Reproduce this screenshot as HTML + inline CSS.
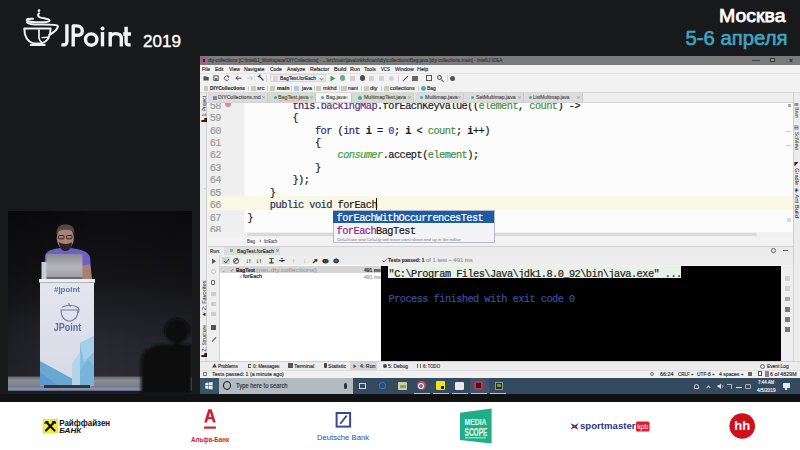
<!DOCTYPE html>
<html><head><meta charset="utf-8">
<style>
*{margin:0;padding:0;box-sizing:border-box}
html,body{width:800px;height:450px;overflow:hidden}
body{position:relative;background:#18191b;font-family:"Liberation Sans",sans-serif}
.a{position:absolute;white-space:pre}
.m{font-family:"Liberation Mono",monospace;-webkit-text-stroke:0.2px currentColor}
svg{position:absolute;left:0;top:0}
</style></head><body>

<svg width="800" height="56" style="left:0;top:0">
  <g font-family="Liberation Sans" fill="#fff">
    <text x="719" y="22.3" font-size="18.3" textLength="66.5" lengthAdjust="spacingAndGlyphs" stroke="#fff" stroke-width="0.75">Москва</text>
    <text x="685.5" y="45.2" font-size="19.5" textLength="102" lengthAdjust="spacingAndGlyphs" fill="#40a4c0" stroke="#40a4c0" stroke-width="0.6">5-6 апреля</text>
    <text x="143" y="47" font-size="16.5" textLength="38" lengthAdjust="spacingAndGlyphs" stroke="#fff" stroke-width="0.35">2019</text>
    </g>
  <g fill="none" stroke="#f4f4f4" stroke-width="3.4" stroke-linecap="butt" stroke-linejoin="round">
    <path d="M66.9 24.3 V41.5 C66.9 44.7 65 45.3 61.4 44.6"/>
    <path d="M73.2 46.4 V25.9 H76.6 C80.6 25.9 82.3 28.3 82.3 30.9 C82.3 33.6 80.6 35.3 76.6 35.3 H73.2"/>
    <circle cx="91.2" cy="39.6" r="5.7"/>
    <path d="M102.5 32 V46.4"/>
    <path d="M110.2 32 V46.4 M110.2 38.5 C110.2 34.9 112.5 33.6 115.7 33.6 C119 33.6 121.3 34.9 121.3 38.5 V46.4"/>
    <path d="M126.1 26.7 V42.3 C126.1 44.6 127.5 45 130.6 44.8 M123.2 34 H131"/>
  </g>
  <g fill="#f4f4f4">
    <circle cx="102.5" cy="28.6" r="2"/>
  </g>
  <g transform="translate(20,6)" fill="none" stroke="#f2f2f2" stroke-width="2" stroke-linecap="round" stroke-linejoin="round">
    <circle cx="19" cy="4.6" r="1.3" fill="#f2f2f2" stroke="none"/>
    <path d="M19 7.2 C17.6 8.6 17.8 10.4 20 11.4 C24 12.6 29.3 12.8 29.6 14.6 C29.6 16.4 22 16.5 15 16.2 C8 16 6.3 14.8 6.8 13.6 C7.3 12.8 10 12.6 13 12.7"/>
    <path d="M7 16.5 C8 18 12 18.6 20 18.6 C30 18.6 37 18.4 37.8 20 C38.3 22.5 34 26.5 29.3 28.8"/>
    <path d="M4.3 22.4 L30.6 22.4 C30.6 30 27.5 35.5 21.5 37.4 L13.5 37.4 C7.5 35.5 4.3 30 4.3 22.4 Z"/>
    <path d="M10.8 38.9 L24.6 38.9" stroke-width="2.3"/>
    <path d="M19 24 L19 32 C19.2 34 20 35 21.3 36.2" stroke-width="1.7"/>
    <path d="M22 31.6 L27.5 31.3" stroke-width="1.4"/>
  </g>
</svg>

<svg class="a" style="left:8px;top:211px" width="184" height="183" viewBox="8 211 184 183">
<defs>
 <linearGradient id="wall" x1="0" y1="0" x2="0" y2="1">
  <stop offset="0" stop-color="#0c0c0f"/>
  <stop offset="0.35" stop-color="#141418"/>
  <stop offset="0.7" stop-color="#27282e"/>
  <stop offset="1" stop-color="#2e2f36"/>
 </linearGradient>
 <linearGradient id="wallx" x1="0" y1="0" x2="1" y2="0">
  <stop offset="0" stop-color="#000" stop-opacity="0.25"/>
  <stop offset="0.5" stop-color="#000" stop-opacity="0"/>
  <stop offset="1" stop-color="#000" stop-opacity="0.15"/>
 </linearGradient>
 <linearGradient id="floor" x1="0" y1="0" x2="0" y2="1">
  <stop offset="0" stop-color="#606268"/>
  <stop offset="0.25" stop-color="#8c8e95"/>
  <stop offset="0.7" stop-color="#7a7d86"/>
  <stop offset="0.85" stop-color="#8a9ab8"/>
  <stop offset="1" stop-color="#3a4a68"/>
 </linearGradient>
 <linearGradient id="lap" x1="0" y1="0" x2="0" y2="1">
  <stop offset="0" stop-color="#8a8a92"/>
  <stop offset="0.5" stop-color="#b4b4ba"/>
  <stop offset="1" stop-color="#9c9ca4"/>
 </linearGradient>
 <linearGradient id="pod" x1="0" y1="0" x2="0" y2="1">
  <stop offset="0" stop-color="#e4e6ee"/>
  <stop offset="1" stop-color="#d6dae6"/>
 </linearGradient>
 <filter id="bl" x="-10%" y="-10%" width="120%" height="120%"><feGaussianBlur stdDeviation="0.7"/></filter>
 <filter id="bl2" x="-10%" y="-10%" width="120%" height="120%"><feGaussianBlur stdDeviation="1.6"/></filter>
</defs>
<rect x="8" y="211" width="184" height="183" fill="url(#wall)"/>
<rect x="8" y="211" width="184" height="183" fill="url(#wallx)"/>
<g filter="url(#bl)">
 <!-- floor -->
 <rect x="8" y="376.5" width="184" height="15" fill="url(#floor)"/>
 <rect x="8" y="391" width="184" height="3" fill="#1a1c22"/>
 <!-- speaker -->
 <path d="M44 280 L45 256 C46 251 52 249 60 248 L70 248 C80 249 88 251 90 257 L92 280 Z" fill="#6c5ec8"/>
 <path d="M82 266 L90 264 L92 280 L82 280Z" fill="#a88070"/>
 <rect x="41.5" y="262" width="5.5" height="18" fill="#c8ccd6"/>
 <ellipse cx="65.3" cy="238" rx="8.6" ry="11.5" fill="#a88272"/>
 <path d="M56.5 235 C56 227 60 224.5 65.5 224.5 C71 224.5 75 227 74.5 234 L73 231.5 C70 229 61 229 58 231.5 Z" fill="#5a4a40"/>
 <path d="M59 242 C59.5 248.5 62 251 65.5 251 C69 251 71.5 248.5 72 242 C69 244.5 62 244.5 59 242Z" fill="#2e2422"/>
 <g fill="none" stroke="#2a2020" stroke-width="1">
  <rect x="58.5" y="235.5" width="5.5" height="3.3" rx="1"/>
  <rect x="66.5" y="235.5" width="5.5" height="3.3" rx="1"/>
 </g>
 <rect x="46.5" y="254" width="36" height="25" fill="url(#lap)"/>
 <rect x="46.5" y="277" width="36" height="2.5" fill="#6a6a72"/>
 <!-- podium -->
 <rect x="39" y="279" width="56" height="3.5" fill="#eceef4"/>
 <rect x="40" y="282.5" width="54" height="103" fill="url(#pod)"/>
 <path d="M40 361 L72 378.5 L72 385.5 L40 385.5Z" fill="#6aa8d2"/>
 <path d="M40 372 L58 385.5 L40 385.5Z" fill="#5a9acc"/>
 <path d="M72 364 L80 352 L80 385.5 L72 385.5Z" fill="#b4d4ea"/>
 <path d="M80 343 L94 336 L94 385.5 L80 385.5Z" fill="#86bee0"/>
 <path d="M80 343 L94 336 L94 352 L84 362Z" fill="#a4d0ea"/>
 <path d="M80 370 L88 360 L94 366 L94 385.5 L80 385.5Z" fill="#78b4da"/>
 <rect x="44" y="385" width="46" height="3" fill="#2a2420" opacity="0.85"/>
</g>
<g filter="url(#bl)">
 <text x="54" y="292.3" font-family="Liberation Sans" font-size="7.4" font-weight="bold" fill="#5c76a4" textLength="26" lengthAdjust="spacingAndGlyphs">#jpoint</text>
 <text x="53.8" y="331" font-family="Liberation Sans" font-size="10" font-weight="bold" fill="#5a70a0" textLength="27.5" lengthAdjust="spacingAndGlyphs">JPoint</text>
 <g fill="none" stroke="#6a7aa0" stroke-width="1.1">
  <path d="M61 310 L78 310 C78 316 75 320 71 321 L68 321 C64 320 61 316 61 310Z"/>
  <path d="M62 307.5 C64 305 74 305 77 307 C79 308 80 310 78 313"/>
  <path d="M69 303 C68 304.5 71 305.5 70 307"/>
 </g>
</g>
<!-- silhouette -->
<g filter="url(#bl2)">
 <rect x="150" y="338" width="42" height="16" fill="#24252b"/>
 <circle cx="177" cy="331" r="12.5" fill="#08080a"/>
 <path d="M141 394 L141 362 C142 350 152 345 162 344 L192 344 L192 394Z" fill="#08080a"/>
</g>
</svg>
<div class="a" style="left:200px;top:56px;width:600px;height:338px;background:#f0f0f0;"></div>
<div class="a" style="left:200px;top:56px;width:600px;height:8.5px;background:#7b7b7b;"></div>
<div class="a" style="left:201px;top:57.3px;width:5px;height:6px;background:#c04a78;border-radius:1px"></div>
<div class="a" style="left:202.5px;top:58.5px;width:2.5px;height:3.5px;background:#2a2a55;"></div>
<svg class="a" style="left:207.7px;top:60.3px;overflow:visible" width="1" height="1"><text x="0" y="2.00" font-family="Liberation Sans" font-size="5.8" fill="#3a3a3a" textLength="294.5" lengthAdjust="spacingAndGlyphs" text-anchor="start" stroke="#3a3a3a" stroke-width="0.18" >diy-collections [C:\IntelliJ_Workspace\DIYCollections] - ...\src\main\java\mkhd\nani\diy\collections\Bag.java [diy-collections.main] - IntelliJ IDEA</text></svg>
<div class="a" style="left:752px;top:60px;width:8px;height:0.7px;background:#444;"></div>
<div class="a" style="left:770px;top:58px;width:4.5px;height:4.2px;background:#9a9a9a;border:0.8px solid #333"></div>
<div class="a" style="left:789.3px;top:60px;width:3.8px;height:0.7px;background:#333;transform:rotate(45deg)"></div>
<div class="a" style="left:789.3px;top:60px;width:3.8px;height:0.7px;background:#333;transform:rotate(-45deg)"></div>
<div class="a" style="left:200px;top:64.5px;width:600px;height:9px;background:#f2f2f2;"></div>
<svg class="a" style="left:201.89999999999998px;top:69px;overflow:visible" width="1" height="1"><text x="0" y="2.14" font-family="Liberation Sans" font-size="6.2" fill="#2a2a2a" textLength="8.0" lengthAdjust="spacingAndGlyphs" text-anchor="start" stroke="#2a2a2a" stroke-width="0.18" >File</text></svg>
<svg class="a" style="left:215.39999999999998px;top:69px;overflow:visible" width="1" height="1"><text x="0" y="2.14" font-family="Liberation Sans" font-size="6.2" fill="#2a2a2a" textLength="8.5" lengthAdjust="spacingAndGlyphs" text-anchor="start" stroke="#2a2a2a" stroke-width="0.18" >Edit</text></svg>
<svg class="a" style="left:228.6px;top:69px;overflow:visible" width="1" height="1"><text x="0" y="2.14" font-family="Liberation Sans" font-size="6.2" fill="#2a2a2a" textLength="11.1" lengthAdjust="spacingAndGlyphs" text-anchor="start" stroke="#2a2a2a" stroke-width="0.18" >View</text></svg>
<svg class="a" style="left:243.89999999999998px;top:69px;overflow:visible" width="1" height="1"><text x="0" y="2.14" font-family="Liberation Sans" font-size="6.2" fill="#2a2a2a" textLength="20.3" lengthAdjust="spacingAndGlyphs" text-anchor="start" stroke="#2a2a2a" stroke-width="0.18" >Navigate</text></svg>
<svg class="a" style="left:269.7px;top:69px;overflow:visible" width="1" height="1"><text x="0" y="2.14" font-family="Liberation Sans" font-size="6.2" fill="#2a2a2a" textLength="11.6" lengthAdjust="spacingAndGlyphs" text-anchor="start" stroke="#2a2a2a" stroke-width="0.18" >Code</text></svg>
<svg class="a" style="left:286.7px;top:69px;overflow:visible" width="1" height="1"><text x="0" y="2.14" font-family="Liberation Sans" font-size="6.2" fill="#2a2a2a" textLength="18.1" lengthAdjust="spacingAndGlyphs" text-anchor="start" stroke="#2a2a2a" stroke-width="0.18" >Analyze</text></svg>
<svg class="a" style="left:310.2px;top:69px;overflow:visible" width="1" height="1"><text x="0" y="2.14" font-family="Liberation Sans" font-size="6.2" fill="#2a2a2a" textLength="19.1" lengthAdjust="spacingAndGlyphs" text-anchor="start" stroke="#2a2a2a" stroke-width="0.18" >Refactor</text></svg>
<svg class="a" style="left:333.5px;top:69px;overflow:visible" width="1" height="1"><text x="0" y="2.14" font-family="Liberation Sans" font-size="6.2" fill="#2a2a2a" textLength="12.4" lengthAdjust="spacingAndGlyphs" text-anchor="start" stroke="#2a2a2a" stroke-width="0.18" >Build</text></svg>
<svg class="a" style="left:349.7px;top:69px;overflow:visible" width="1" height="1"><text x="0" y="2.14" font-family="Liberation Sans" font-size="6.2" fill="#2a2a2a" textLength="10.0" lengthAdjust="spacingAndGlyphs" text-anchor="start" stroke="#2a2a2a" stroke-width="0.18" >Run</text></svg>
<svg class="a" style="left:364.09999999999997px;top:69px;overflow:visible" width="1" height="1"><text x="0" y="2.14" font-family="Liberation Sans" font-size="6.2" fill="#2a2a2a" textLength="11.8" lengthAdjust="spacingAndGlyphs" text-anchor="start" stroke="#2a2a2a" stroke-width="0.18" >Tools</text></svg>
<svg class="a" style="left:380.9px;top:69px;overflow:visible" width="1" height="1"><text x="0" y="2.14" font-family="Liberation Sans" font-size="6.2" fill="#2a2a2a" textLength="8.8" lengthAdjust="spacingAndGlyphs" text-anchor="start" stroke="#2a2a2a" stroke-width="0.18" >VCS</text></svg>
<svg class="a" style="left:394.7px;top:69px;overflow:visible" width="1" height="1"><text x="0" y="2.14" font-family="Liberation Sans" font-size="6.2" fill="#2a2a2a" textLength="18.7" lengthAdjust="spacingAndGlyphs" text-anchor="start" stroke="#2a2a2a" stroke-width="0.18" >Window</text></svg>
<svg class="a" style="left:417.2px;top:69px;overflow:visible" width="1" height="1"><text x="0" y="2.14" font-family="Liberation Sans" font-size="6.2" fill="#2a2a2a" textLength="11.2" lengthAdjust="spacingAndGlyphs" text-anchor="start" stroke="#2a2a2a" stroke-width="0.18" >Help</text></svg>
<div class="a" style="left:200px;top:73.5px;width:600px;height:9.5px;background:#f2f2f2;"></div>
<div class="a" style="left:200px;top:73.3px;width:600px;height:0.5px;background:#e4e4e4;"></div>
<div class="a" style="left:200px;top:82.8px;width:600px;height:0.6px;background:#dadada;"></div>
<svg class="a" style="left:200px;top:73px" width="70" height="10"><g fill="none" stroke="#4a4a4a" stroke-width="1"><path d="M3.5 3.2 H6 L6.8 4 H8.8 V7.5 H3.5Z" fill="#555" stroke="none"/><rect x="13.8" y="2.9" width="4.4" height="4.6" stroke-width="0.9"/><rect x="14.8" y="5.2" width="2.4" height="1.6" fill="#4a4a4a" stroke="none"/><path d="M28.4 3.7 A2.3 2.3 0 1 0 28.7 6.3" stroke-width="0.9"/><path d="M27.2 2.4 L29.2 3.6 L27.6 4.9" stroke-width="0.8"/><path d="M36 5.2 H41.5 M38 3.2 L36 5.2 L38 7.2" stroke-width="1"/><path d="M47 5.2 H52.5 M50.5 3.2 L52.5 5.2 L50.5 7.2" stroke="#c4c4c4" stroke-width="1"/><path d="M54.3 2.5 V8" stroke="#d6d6d6" stroke-width="0.6"/><path d="M59 3 L63.5 7.5" stroke-width="1.3"/><path d="M57.8 4 L60.5 1.8" stroke-width="1.2"/></g></svg>
<div class="a" style="left:266px;top:74.5px;width:0.6px;height:7px;background:#d4d4d4;"></div>
<div class="a" style="left:270px;top:74.3px;width:56px;height:8px;background:#ececec;border:0.6px solid #d6d6d6"></div>
<div class="a" style="left:272.5px;top:75.6px;width:5px;height:5px;background:#d8d8d8;"></div>
<svg class="a" style="left:280.2px;top:78px;overflow:visible" width="1" height="1"><text x="0" y="2.14" font-family="Liberation Sans" font-size="6.2" fill="#2c2c2c" textLength="36.1" lengthAdjust="spacingAndGlyphs" text-anchor="start" stroke="#2c2c2c" stroke-width="0.18" >BagTest.forEach</text></svg>
<div class="a" style="left:320px;top:76.8px;width:3px;height:3px;background:transparent;border-right:0.8px solid #888;border-bottom:0.8px solid #888;transform:rotate(45deg)"></div>
<svg class="a" style="left:329px;top:74.5px" width="8" height="7"><path d="M1.5 0.8 L6.5 3.5 L1.5 6.2Z" fill="#3a9a5a"/></svg>
<div class="a" style="left:340px;top:75.3px;width:5px;height:5.5px;background:#6aa890;border-radius:50%"></div>
<div class="a" style="left:350px;top:75.5px;width:5px;height:5px;background:#cfcfcf;border-radius:1px"></div>
<div class="a" style="left:359.5px;top:75.3px;width:5px;height:5.5px;background:#4a4a4a;border-radius:50%"></div>
<div class="a" style="left:369px;top:75.5px;width:5px;height:5px;background:#d2d2d2;"></div>
<div class="a" style="left:379px;top:75.5px;width:5px;height:5px;background:#d2d2d2;"></div>
<div class="a" style="left:389px;top:75.5px;width:5px;height:5px;background:#d2d2d2;border-radius:50%"></div>
<div class="a" style="left:398px;top:74.5px;width:0.6px;height:7px;background:#d4d4d4;"></div>
<div class="a" style="left:402px;top:77.5px;width:7px;height:1.2px;background:#444;transform:rotate(-45deg)"></div>
<div class="a" style="left:412px;top:75.5px;width:6px;height:5px;background:#666;border-radius:0.5px"></div>
<div class="a" style="left:426px;top:75px;width:6px;height:6px;background:transparent;border:1px solid #555"></div>
<div class="a" style="left:437px;top:75.2px;width:5px;height:5px;background:transparent;border:1.1px solid #444;border-radius:50%"></div>
<div class="a" style="left:441px;top:79.8px;width:2.5px;height:1px;background:#444;transform:rotate(45deg)"></div>
<div class="a" style="left:447px;top:74.5px;width:0.6px;height:7px;background:#d4d4d4;"></div>
<div class="a" style="left:450px;top:75.5px;width:5px;height:5px;background:#555;border-radius:50%"></div>
<div class="a" style="left:200px;top:83.3px;width:600px;height:9.3px;background:#f2f2f2;"></div>
<div class="a" style="left:200px;top:92.4px;width:600px;height:0.5px;background:#d8d8d8;"></div>
<div class="a" style="left:203.7px;top:86px;width:4.300000000000011px;height:4.6px;background:#c9c9bc;border-radius:0.5px"></div>
<svg class="a" style="left:210.29999999999998px;top:88.3px;overflow:visible" width="1" height="1"><text x="0" y="2.14" font-family="Liberation Sans" font-size="6.2" fill="#2e2e2e" textLength="35.0" lengthAdjust="spacingAndGlyphs" text-anchor="start" font-weight="bold" stroke="#2e2e2e" stroke-width="0.18" >DIYCollections</text></svg>
<div class="a" style="left:251px;top:86px;width:4.599999999999994px;height:4.6px;background:#c9c9bc;border-radius:0.5px"></div>
<svg class="a" style="left:257.2px;top:88.3px;overflow:visible" width="1" height="1"><text x="0" y="2.14" font-family="Liberation Sans" font-size="6.2" fill="#2e2e2e" textLength="7.5" lengthAdjust="spacingAndGlyphs" text-anchor="start" stroke="#2e2e2e" stroke-width="0.18" >src</text></svg>
<div class="a" style="left:270px;top:86px;width:5px;height:4.6px;background:#c9c9bc;border-radius:0.5px"></div>
<svg class="a" style="left:276.59999999999997px;top:88.3px;overflow:visible" width="1" height="1"><text x="0" y="2.14" font-family="Liberation Sans" font-size="6.2" fill="#2e2e2e" textLength="12.5" lengthAdjust="spacingAndGlyphs" text-anchor="start" font-weight="bold" stroke="#2e2e2e" stroke-width="0.18" >main</text></svg>
<div class="a" style="left:294.4px;top:86px;width:5.100000000000023px;height:4.6px;background:#b4c8dc;border-radius:0.5px"></div>
<svg class="a" style="left:301.59999999999997px;top:88.3px;overflow:visible" width="1" height="1"><text x="0" y="2.14" font-family="Liberation Sans" font-size="6.2" fill="#2e2e2e" textLength="9.9" lengthAdjust="spacingAndGlyphs" text-anchor="start" stroke="#2e2e2e" stroke-width="0.18" >java</text></svg>
<div class="a" style="left:316.2px;top:86px;width:5.0px;height:4.6px;background:#c9c9bc;border-radius:0.5px"></div>
<svg class="a" style="left:322.7px;top:88.3px;overflow:visible" width="1" height="1"><text x="0" y="2.14" font-family="Liberation Sans" font-size="6.2" fill="#2e2e2e" textLength="13.6" lengthAdjust="spacingAndGlyphs" text-anchor="start" stroke="#2e2e2e" stroke-width="0.18" >mkhd</text></svg>
<div class="a" style="left:341.2px;top:86px;width:5.800000000000011px;height:4.6px;background:#c9c9bc;border-radius:0.5px"></div>
<svg class="a" style="left:348.4px;top:88.3px;overflow:visible" width="1" height="1"><text x="0" y="2.14" font-family="Liberation Sans" font-size="6.2" fill="#2e2e2e" textLength="9.9" lengthAdjust="spacingAndGlyphs" text-anchor="start" stroke="#2e2e2e" stroke-width="0.18" >nani</text></svg>
<div class="a" style="left:363.7px;top:86px;width:5.699999999999989px;height:4.6px;background:#c9c9bc;border-radius:0.5px"></div>
<svg class="a" style="left:370.3px;top:88.3px;overflow:visible" width="1" height="1"><text x="0" y="2.14" font-family="Liberation Sans" font-size="6.2" fill="#2e2e2e" textLength="7.5" lengthAdjust="spacingAndGlyphs" text-anchor="start" stroke="#2e2e2e" stroke-width="0.18" >diy</text></svg>
<div class="a" style="left:383.7px;top:86px;width:5.699999999999989px;height:4.6px;background:#c9c9bc;border-radius:0.5px"></div>
<svg class="a" style="left:390.2px;top:88.3px;overflow:visible" width="1" height="1"><text x="0" y="2.14" font-family="Liberation Sans" font-size="6.2" fill="#2e2e2e" textLength="24.7" lengthAdjust="spacingAndGlyphs" text-anchor="start" stroke="#2e2e2e" stroke-width="0.18" >collections</text></svg>
<div class="a" style="left:420.7px;top:85.6px;width:5.699999999999989px;height:5.6px;background:#5aa6c4;border-radius:50%"></div>
<svg class="a" style="left:427.4px;top:88.3px;overflow:visible" width="1" height="1"><text x="0" y="2.14" font-family="Liberation Sans" font-size="6.2" fill="#2e2e2e" textLength="8.9" lengthAdjust="spacingAndGlyphs" text-anchor="start" stroke="#2e2e2e" stroke-width="0.18" >Bag</text></svg>
<div class="a" style="left:248px;top:85.5px;width:0.6px;height:5.5px;background:#d0d0d0;"></div>
<div class="a" style="left:267px;top:85.5px;width:0.6px;height:5.5px;background:#d0d0d0;"></div>
<div class="a" style="left:291px;top:85.5px;width:0.6px;height:5.5px;background:#d0d0d0;"></div>
<div class="a" style="left:313.7px;top:85.5px;width:0.6px;height:5.5px;background:#d0d0d0;"></div>
<div class="a" style="left:339.4px;top:85.5px;width:0.6px;height:5.5px;background:#d0d0d0;"></div>
<div class="a" style="left:361px;top:85.5px;width:0.6px;height:5.5px;background:#d0d0d0;"></div>
<div class="a" style="left:381.2px;top:85.5px;width:0.6px;height:5.5px;background:#d0d0d0;"></div>
<div class="a" style="left:417.6px;top:85.5px;width:0.6px;height:5.5px;background:#d0d0d0;"></div>
<div class="a" style="left:200px;top:92.8px;width:600px;height:10px;background:#eeeeee;"></div>
<div class="a" style="left:208px;top:93px;width:60px;height:9.5px;background:#dcdcdc;border-right:0.7px solid #c8c8c8"></div>
<div class="a" style="left:212.5px;top:95.7px;width:4.199999999999989px;height:4.199999999999989px;background:#7090a8;border-radius:0.5px"></div>
<svg class="a" style="left:217.79999999999998px;top:97.4px;overflow:visible" width="1" height="1"><text x="0" y="2.07" font-family="Liberation Sans" font-size="6.0" fill="#505050" textLength="42.6" lengthAdjust="spacingAndGlyphs" text-anchor="start" stroke="#505050" stroke-width="0.18" >DIYCollections.md</text></svg>
<div class="a" style="left:261.8px;top:97.1px;width:3px;height:0.6px;background:#aaa;transform:rotate(45deg)"></div>
<div class="a" style="left:261.8px;top:97.1px;width:3px;height:0.6px;background:#aaa;transform:rotate(-45deg)"></div>
<div class="a" style="left:268px;top:93px;width:48.19999999999999px;height:9.5px;background:#d4dcd2;border-right:0.7px solid #c8c8c8"></div>
<div class="a" style="left:273.9px;top:95.7px;width:3.0px;height:3.0px;background:#40a898;border-radius:50%"></div>
<svg class="a" style="left:278.2px;top:97.4px;overflow:visible" width="1" height="1"><text x="0" y="2.07" font-family="Liberation Sans" font-size="6.0" fill="#4a5a48" textLength="30.4" lengthAdjust="spacingAndGlyphs" text-anchor="start" stroke="#4a5a48" stroke-width="0.18" >BagTest.java</text></svg>
<div class="a" style="left:278.5px;top:100.4px;width:29.80000000000001px;height:0.5px;background:#e4b4b0;"></div>
<div class="a" style="left:310.0px;top:97.1px;width:3px;height:0.6px;background:#aaa;transform:rotate(45deg)"></div>
<div class="a" style="left:310.0px;top:97.1px;width:3px;height:0.6px;background:#aaa;transform:rotate(-45deg)"></div>
<div class="a" style="left:316.2px;top:93px;width:35.400000000000034px;height:9.5px;background:#f6f6f6;border-right:0.7px solid #c8c8c8"></div>
<div class="a" style="left:320.5px;top:95.7px;width:3px;height:3px;background:#45a2c6;border-radius:50%"></div>
<svg class="a" style="left:326.0px;top:97.4px;overflow:visible" width="1" height="1"><text x="0" y="2.07" font-family="Liberation Sans" font-size="6.0" fill="#505050" textLength="19.7" lengthAdjust="spacingAndGlyphs" text-anchor="start" stroke="#505050" stroke-width="0.18" >Bag.java</text></svg>
<div class="a" style="left:345.40000000000003px;top:97.1px;width:3px;height:0.6px;background:#aaa;transform:rotate(45deg)"></div>
<div class="a" style="left:345.40000000000003px;top:97.1px;width:3px;height:0.6px;background:#aaa;transform:rotate(-45deg)"></div>
<div class="a" style="left:351.6px;top:93px;width:62.89999999999998px;height:9.5px;background:#d4dcd2;border-right:0.7px solid #c8c8c8"></div>
<div class="a" style="left:358.0px;top:95.7px;width:4.199999999999989px;height:4.199999999999989px;background:#40a898;border-radius:50%"></div>
<svg class="a" style="left:363.9px;top:97.4px;overflow:visible" width="1" height="1"><text x="0" y="2.07" font-family="Liberation Sans" font-size="6.0" fill="#505050" textLength="41.9" lengthAdjust="spacingAndGlyphs" text-anchor="start" stroke="#505050" stroke-width="0.18" >MultimapTest.java</text></svg>
<div class="a" style="left:408.3px;top:97.1px;width:3px;height:0.6px;background:#aaa;transform:rotate(45deg)"></div>
<div class="a" style="left:408.3px;top:97.1px;width:3px;height:0.6px;background:#aaa;transform:rotate(-45deg)"></div>
<div class="a" style="left:414.5px;top:93px;width:49.5px;height:9.5px;background:#dcdcdc;border-right:0.7px solid #c8c8c8"></div>
<div class="a" style="left:419.7px;top:95.7px;width:3.5px;height:3.5px;background:#48a8a0;border-radius:50%"></div>
<svg class="a" style="left:424.7px;top:97.4px;overflow:visible" width="1" height="1"><text x="0" y="2.07" font-family="Liberation Sans" font-size="6.0" fill="#505050" textLength="32.8" lengthAdjust="spacingAndGlyphs" text-anchor="start" stroke="#505050" stroke-width="0.18" >Multimap.java</text></svg>
<div class="a" style="left:457.8px;top:97.1px;width:3px;height:0.6px;background:#aaa;transform:rotate(45deg)"></div>
<div class="a" style="left:457.8px;top:97.1px;width:3px;height:0.6px;background:#aaa;transform:rotate(-45deg)"></div>
<div class="a" style="left:464px;top:93px;width:60.200000000000045px;height:9.5px;background:#dcdcdc;border-right:0.7px solid #c8c8c8"></div>
<div class="a" style="left:470.8px;top:95.7px;width:3.599999999999966px;height:3.599999999999966px;background:#48a8a0;border-radius:50%"></div>
<svg class="a" style="left:476.0px;top:97.4px;overflow:visible" width="1" height="1"><text x="0" y="2.07" font-family="Liberation Sans" font-size="6.0" fill="#505050" textLength="39.6" lengthAdjust="spacingAndGlyphs" text-anchor="start" stroke="#505050" stroke-width="0.18" >SetMultimap.java</text></svg>
<div class="a" style="left:518.0px;top:97.1px;width:3px;height:0.6px;background:#aaa;transform:rotate(45deg)"></div>
<div class="a" style="left:518.0px;top:97.1px;width:3px;height:0.6px;background:#aaa;transform:rotate(-45deg)"></div>
<div class="a" style="left:524.2px;top:93px;width:58.59999999999991px;height:9.5px;background:#dcdcdc;border-right:0.7px solid #c8c8c8"></div>
<div class="a" style="left:528.7px;top:95.7px;width:3.2999999999999545px;height:3.2999999999999545px;background:#48a8a0;border-radius:50%"></div>
<svg class="a" style="left:532.9000000000001px;top:97.4px;overflow:visible" width="1" height="1"><text x="0" y="2.07" font-family="Liberation Sans" font-size="6.0" fill="#505050" textLength="36.4" lengthAdjust="spacingAndGlyphs" text-anchor="start" stroke="#505050" stroke-width="0.18" >ListMultimap.java</text></svg>
<div class="a" style="left:576.5999999999999px;top:97.1px;width:3px;height:0.6px;background:#aaa;transform:rotate(45deg)"></div>
<div class="a" style="left:576.5999999999999px;top:97.1px;width:3px;height:0.6px;background:#aaa;transform:rotate(-45deg)"></div>
<div class="a" style="left:200px;top:102.3px;width:600px;height:0.6px;background:#d2d2d2;"></div>
<div class="a" style="left:200px;top:92.8px;width:7px;height:276px;background:#ececec;border-right:0.7px solid #d0d0d0"></div>
<svg class="a" style="left:200px;top:93px" width="7" height="275"><g font-family="Liberation Sans" font-size="4.8" fill="#222"><text transform="translate(5,96) rotate(-90)" textLength="0">.</text><text transform="translate(5.5,29) rotate(-90)" textLength="26" lengthAdjust="spacingAndGlyphs">▙ 1: Project</text><text transform="translate(5.5,223.5) rotate(-90)" textLength="36" lengthAdjust="spacingAndGlyphs">★ 2: Favorites</text><text transform="translate(5.5,264) rotate(-90)" textLength="32" lengthAdjust="spacingAndGlyphs">▙ Z: Structure</text></g></svg>
<div class="a" style="left:792.5px;top:92.8px;width:7.5px;height:276px;background:#ececec;border-left:0.7px solid #d0d0d0"></div>
<svg class="a" style="left:792px;top:93px" width="8" height="275"><g font-family="Liberation Sans" font-size="4.8" fill="#222"><text transform="translate(2.8,10) rotate(90)" textLength="15" lengthAdjust="spacingAndGlyphs">▤ Maven</text><text transform="translate(2.8,32) rotate(90)" textLength="25" lengthAdjust="spacingAndGlyphs">▥ SciView</text><text transform="translate(2.8,69) rotate(90)" textLength="23" lengthAdjust="spacingAndGlyphs">◣ Gradle</text><text transform="translate(2.8,95) rotate(90)" textLength="30" lengthAdjust="spacingAndGlyphs">◈ Ant Build</text></g></svg>
<div class="a" style="left:207.5px;top:102.8px;width:36px;height:129.5px;background:#efefef;"></div>
<div class="a" style="left:243.5px;top:102.8px;width:2.5px;height:129.5px;background:#f8f8f8;"></div>
<div class="a" style="left:246px;top:102.8px;width:546.5px;height:129.5px;background:#fcfcfc;"></div>
<div class="a" style="left:207.5px;top:196.2px;width:585px;height:13.6px;background:#f8f8e4;"></div>
<div class="a" style="left:786px;top:131px;width:5px;height:0.9px;background:#e6cf78;"></div>
<div class="a" style="left:786px;top:145px;width:5px;height:0.9px;background:#e6cf78;"></div>
<div class="a" style="left:787.5px;top:103.5px;width:3.5px;height:3.5px;background:#a0aab0;"></div>
<div class="a" style="left:787px;top:218px;width:4px;height:4px;background:#d8d8d8;"></div>
<div class="a" style="left:207px;top:102.8px;width:586px;height:129.5px;overflow:hidden">
<div class="a m" style="left:2.6px;top:-3.10px;width:11.4px;font-size:10.3px;letter-spacing:-0.54px;line-height:12.45px;color:#9c9c9c;text-align:right">58</div>
<div class="a m" style="left:40.3px;top:-3.10px;font-size:10.3px;letter-spacing:-0.54px;line-height:12.45px;color:#1a1a1a">        <span style="color:#2a2a60">this</span>.<span style="color:#55338a">backingMap</span>.forEachKeyValue((<span style="color:#3f8f3f">element</span>, <span style="color:#3f8f3f">count</span>) -&gt;</div>
<div class="a m" style="left:2.6px;top:9.35px;width:11.4px;font-size:10.3px;letter-spacing:-0.54px;line-height:12.45px;color:#9c9c9c;text-align:right">59</div>
<div class="a m" style="left:40.3px;top:9.35px;font-size:10.3px;letter-spacing:-0.54px;line-height:12.45px;color:#1a1a1a">        {</div>
<div class="a m" style="left:2.6px;top:21.80px;width:11.4px;font-size:10.3px;letter-spacing:-0.54px;line-height:12.45px;color:#9c9c9c;text-align:right">60</div>
<div class="a m" style="left:40.3px;top:21.80px;font-size:10.3px;letter-spacing:-0.54px;line-height:12.45px;color:#1a1a1a">            <span style="color:#2a2a60">for</span> (<span style="color:#2a2a60">int</span> <span style="font-weight:bold">i</span> = <span style="color:#3535a8">0</span>; <span style="font-weight:bold">i</span> &lt; <span style="color:#3f8f3f">count</span>; <span style="font-weight:bold">i</span>++)</div>
<div class="a m" style="left:2.6px;top:34.25px;width:11.4px;font-size:10.3px;letter-spacing:-0.54px;line-height:12.45px;color:#9c9c9c;text-align:right">61</div>
<div class="a m" style="left:40.3px;top:34.25px;font-size:10.3px;letter-spacing:-0.54px;line-height:12.45px;color:#1a1a1a">            {</div>
<div class="a m" style="left:2.6px;top:46.70px;width:11.4px;font-size:10.3px;letter-spacing:-0.54px;line-height:12.45px;color:#9c9c9c;text-align:right">62</div>
<div class="a m" style="left:40.3px;top:46.70px;font-size:10.3px;letter-spacing:-0.54px;line-height:12.45px;color:#1a1a1a">                <span style="color:#43a043;font-style:italic">consumer</span>.accept(<span style="color:#3f8f3f">element</span>);</div>
<div class="a m" style="left:2.6px;top:59.15px;width:11.4px;font-size:10.3px;letter-spacing:-0.54px;line-height:12.45px;color:#9c9c9c;text-align:right">63</div>
<div class="a m" style="left:40.3px;top:59.15px;font-size:10.3px;letter-spacing:-0.54px;line-height:12.45px;color:#1a1a1a">            }</div>
<div class="a m" style="left:2.6px;top:71.60px;width:11.4px;font-size:10.3px;letter-spacing:-0.54px;line-height:12.45px;color:#9c9c9c;text-align:right">64</div>
<div class="a m" style="left:40.3px;top:71.60px;font-size:10.3px;letter-spacing:-0.54px;line-height:12.45px;color:#1a1a1a">        });</div>
<div class="a m" style="left:2.6px;top:84.05px;width:11.4px;font-size:10.3px;letter-spacing:-0.54px;line-height:12.45px;color:#9c9c9c;text-align:right">65</div>
<div class="a m" style="left:40.3px;top:84.05px;font-size:10.3px;letter-spacing:-0.54px;line-height:12.45px;color:#1a1a1a">    }</div>
<div class="a m" style="left:2.6px;top:96.50px;width:11.4px;font-size:10.3px;letter-spacing:-0.54px;line-height:12.45px;color:#9c9c9c;text-align:right">66</div>
<div class="a m" style="left:40.3px;top:96.50px;font-size:10.3px;letter-spacing:-0.54px;line-height:12.45px;color:#1a1a1a">    <span style="color:#2a2a60">public</span> <span style="color:#2a2a60">void</span> forEach</div>
<div class="a m" style="left:2.6px;top:108.95px;width:11.4px;font-size:10.3px;letter-spacing:-0.54px;line-height:12.45px;color:#9c9c9c;text-align:right">67</div>
<div class="a m" style="left:40.3px;top:108.95px;font-size:10.3px;letter-spacing:-0.54px;line-height:12.45px;color:#1a1a1a">}</div>
<div class="a m" style="left:2.6px;top:121.40px;width:11.4px;font-size:10.3px;letter-spacing:-0.54px;line-height:12.45px;color:#9c9c9c;text-align:right">68</div>
</div>
<div class="a" style="left:225px;top:102.8px;width:6px;height:4.5px;background:#e26a8a;border-radius:0 0 3px 3px;opacity:0.8"></div>
<div class="a" style="left:376.2px;top:198.2px;width:0.9px;height:11.4px;background:#111;"></div>
<div class="a" style="left:246px;top:232.3px;width:546.5px;height:5px;background:#f0f0f0;"></div>
<div class="a" style="left:247px;top:233px;width:510px;height:3.2px;background:#d9d9d9;border-radius:1.5px"></div>
<div class="a" style="left:207.5px;top:237.2px;width:585px;height:8.8px;background:#f2f2f2;"></div>
<div class="a" style="left:246.6px;top:237.5px;width:32.5px;height:8.3px;background:#f7f7f7;"></div>
<svg class="a" style="left:247.39999999999998px;top:241.2px;overflow:visible" width="1" height="1"><text x="0" y="1.93" font-family="Liberation Sans" font-size="5.6" fill="#666" textLength="7.9" lengthAdjust="spacingAndGlyphs" text-anchor="start" stroke="#666" stroke-width="0.18" >Bag</text></svg>
<div class="a" style="left:259px;top:240.3px;width:2px;height:2px;background:transparent;border-right:0.6px solid #999;border-top:0.6px solid #999;transform:rotate(45deg)"></div>
<svg class="a" style="left:263.7px;top:241.2px;overflow:visible" width="1" height="1"><text x="0" y="1.93" font-family="Liberation Sans" font-size="5.6" fill="#666" textLength="13.0" lengthAdjust="spacingAndGlyphs" text-anchor="start" stroke="#666" stroke-width="0.18" >forEach</text></svg>
<div class="a" style="left:207.5px;top:246px;width:585px;height:9px;background:#ececec;border-top:0.6px solid #d2d2d2"></div>
<svg class="a" style="left:210.29999999999998px;top:250.5px;overflow:visible" width="1" height="1"><text x="0" y="2.00" font-family="Liberation Sans" font-size="5.8" fill="#333" textLength="10.2" lengthAdjust="spacingAndGlyphs" text-anchor="start" stroke="#333" stroke-width="0.18" >Run:</text></svg>
<div class="a" style="left:223.6px;top:246.6px;width:56.2px;height:8.4px;background:#dedede;"></div>
<div class="a" style="left:230px;top:249px;width:3px;height:3px;background:#8ab0a0;"></div>
<svg class="a" style="left:236.7px;top:250.5px;overflow:visible" width="1" height="1"><text x="0" y="2.00" font-family="Liberation Sans" font-size="5.8" fill="#333" textLength="37.2" lengthAdjust="spacingAndGlyphs" text-anchor="start" stroke="#333" stroke-width="0.18" >BagTest.forEach</text></svg>
<div class="a" style="left:276px;top:250.3px;width:3px;height:0.6px;background:#888;transform:rotate(45deg)"></div>
<div class="a" style="left:276px;top:250.3px;width:3px;height:0.6px;background:#888;transform:rotate(-45deg)"></div>
<div class="a" style="left:771px;top:248.3px;width:4.5px;height:4.5px;background:transparent;border:1.2px solid #666;border-radius:50%"></div>
<div class="a" style="left:783px;top:250.4px;width:5px;height:0.8px;background:#666;"></div>
<div class="a" style="left:207.5px;top:255px;width:585px;height:10.3px;background:#ededed;"></div>
<div class="a" style="left:207.5px;top:255px;width:12.5px;height:106.2px;background:#eeeeee;border-right:0.6px solid #d2d2d2"></div>
<svg class="a" style="left:211px;top:257.5px" width="6" height="7"><path d="M1 0.5 L5 3.2 L1 6Z" fill="#555"/></svg>
<div class="a" style="left:211px;top:268.5px;width:5px;height:5px;background:transparent;border:1px solid #c8c8c8;border-radius:50%"></div>
<div class="a" style="left:211.3px;top:279.8px;width:4px;height:4.8px;background:transparent;border:0.9px solid #666;border-radius:1px"></div>
<div class="a" style="left:211px;top:292px;width:5px;height:4px;background:#cdcdcd;"></div>
<div class="a" style="left:211px;top:302px;width:5px;height:4px;background:#cdcdcd;"></div>
<div class="a" style="left:211px;top:312px;width:5px;height:4px;background:#cdcdcd;"></div>
<div class="a" style="left:211px;top:325px;width:5px;height:4.5px;background:#555;"></div>
<div class="a" style="left:210.5px;top:339px;width:6px;height:1.1px;background:#555;transform:rotate(-45deg)"></div>
<div class="a" style="left:221.6px;top:256.6px;width:8.8px;height:7.9px;background:#d2d2d2;"></div>
<svg class="a" style="left:222.5px;top:257.5px" width="7" height="6"><path d="M1 3 L2.8 5 L6 1" stroke="#444" stroke-width="1" fill="none"/></svg>
<div class="a" style="left:233px;top:257.5px;width:6px;height:6px;background:transparent;border:0.9px solid #555;border-radius:50%"></div>
<div class="a" style="left:233.3px;top:260.2px;width:5.5px;height:0.7px;background:#555;transform:rotate(-45deg)"></div>
<svg class="a" style="left:245.7px;top:260.6px;overflow:visible" width="1" height="1"><text x="0" y="2.21" font-family="Liberation Sans" font-size="6.4" fill="#333" textLength="5.1" lengthAdjust="spacingAndGlyphs" text-anchor="start" font-weight="bold" stroke="#333" stroke-width="0.18" >↓↑</text></svg>
<svg class="a" style="left:255.5px;top:260.6px;overflow:visible" width="1" height="1"><text x="0" y="2.21" font-family="Liberation Sans" font-size="6.4" fill="#333" textLength="5.8" lengthAdjust="spacingAndGlyphs" text-anchor="start" font-weight="bold" stroke="#333" stroke-width="0.18" >↓↑</text></svg>
<svg class="a" style="left:268.7px;top:260.6px;overflow:visible" width="1" height="1"><text x="0" y="2.21" font-family="Liberation Sans" font-size="6.4" fill="#333" textLength="4.9" lengthAdjust="spacingAndGlyphs" text-anchor="start" font-weight="bold" stroke="#333" stroke-width="0.18" >⌶</text></svg>
<svg class="a" style="left:279.09999999999997px;top:260.6px;overflow:visible" width="1" height="1"><text x="0" y="2.21" font-family="Liberation Sans" font-size="6.4" fill="#333" textLength="5.9" lengthAdjust="spacingAndGlyphs" text-anchor="start" font-weight="bold" stroke="#333" stroke-width="0.18" >÷</text></svg>
<svg class="a" style="left:292.2px;top:260.6px;overflow:visible" width="1" height="1"><text x="0" y="2.21" font-family="Liberation Sans" font-size="6.4" fill="#bbb" textLength="3.1" lengthAdjust="spacingAndGlyphs" text-anchor="start" font-weight="bold" stroke="#bbb" stroke-width="0.18" >↑</text></svg>
<svg class="a" style="left:303.2px;top:260.6px;overflow:visible" width="1" height="1"><text x="0" y="2.21" font-family="Liberation Sans" font-size="6.4" fill="#bbb" textLength="3.1" lengthAdjust="spacingAndGlyphs" text-anchor="start" font-weight="bold" stroke="#bbb" stroke-width="0.18" >↓</text></svg>
<svg class="a" style="left:311.5px;top:260.6px;overflow:visible" width="1" height="1"><text x="0" y="2.21" font-family="Liberation Sans" font-size="6.4" fill="#333" textLength="5.8" lengthAdjust="spacingAndGlyphs" text-anchor="start" font-weight="bold" stroke="#333" stroke-width="0.18" >↗</text></svg>
<svg class="a" style="left:322.0px;top:260.6px;overflow:visible" width="1" height="1"><text x="0" y="2.21" font-family="Liberation Sans" font-size="6.4" fill="#333" textLength="6.8" lengthAdjust="spacingAndGlyphs" text-anchor="start" font-weight="bold" stroke="#333" stroke-width="0.18" >⊕</text></svg>
<svg class="a" style="left:332.5px;top:260.6px;overflow:visible" width="1" height="1"><text x="0" y="2.21" font-family="Liberation Sans" font-size="6.4" fill="#333" textLength="5.8" lengthAdjust="spacingAndGlyphs" text-anchor="start" font-weight="bold" stroke="#333" stroke-width="0.18" >⚙</text></svg>
<svg class="a" style="left:382px;top:257.5px" width="6" height="5"><path d="M0.5 2.5 L2 4 L5 0.8" stroke="#666" stroke-width="0.9" fill="none"/></svg>
<svg class="a" style="left:387.7px;top:260px;overflow:visible" width="1" height="1"><text x="0" y="1.90" font-family="Liberation Sans" font-size="5.5" fill="#333" textLength="36.6" lengthAdjust="spacingAndGlyphs" text-anchor="start" font-weight="bold" stroke="#333" stroke-width="0.18" >Tests passed: 1</text></svg>
<svg class="a" style="left:425.7px;top:260px;overflow:visible" width="1" height="1"><text x="0" y="1.90" font-family="Liberation Sans" font-size="5.5" fill="#9a9a9a" textLength="46.6" lengthAdjust="spacingAndGlyphs" text-anchor="start" stroke="#9a9a9a" stroke-width="0.18" >of 1 test – 491 ms</text></svg>
<div class="a" style="left:220px;top:265.3px;width:161px;height:96px;background:#ffffff;"></div>
<div class="a" style="left:220px;top:266.3px;width:161px;height:7px;background:#d5d5d5;"></div>
<svg class="a" style="left:222.2px;top:269.8px;overflow:visible" width="1" height="1"><text x="0" y="1.72" font-family="Liberation Sans" font-size="5" fill="#888" textLength="3.1" lengthAdjust="spacingAndGlyphs" text-anchor="start" stroke="#888" stroke-width="0.18" >⌄</text></svg>
<svg class="a" style="left:230.2px;top:269.8px;overflow:visible" width="1" height="1"><text x="0" y="1.72" font-family="Liberation Sans" font-size="5" fill="#777" textLength="4.1" lengthAdjust="spacingAndGlyphs" text-anchor="start" stroke="#777" stroke-width="0.18" >✓</text></svg>
<svg class="a" style="left:236.2px;top:269.8px;overflow:visible" width="1" height="1"><text x="0" y="1.97" font-family="Liberation Sans" font-size="5.7" fill="#222" textLength="19.0" lengthAdjust="spacingAndGlyphs" text-anchor="start" font-weight="bold" stroke="#222" stroke-width="0.18" >BagTest</text></svg>
<svg class="a" style="left:256.4px;top:269.8px;overflow:visible" width="1" height="1"><text x="0" y="1.90" font-family="Liberation Sans" font-size="5.5" fill="#a4a4a4" textLength="60.9" lengthAdjust="spacingAndGlyphs" text-anchor="start" stroke="#a4a4a4" stroke-width="0.18" >(net.diy.collections)</text></svg>
<svg class="a" style="left:363.5px;top:269.6px;overflow:visible" width="1" height="1"><text x="0" y="1.90" font-family="Liberation Sans" font-size="5.5" fill="#333" textLength="16.8" lengthAdjust="spacingAndGlyphs" text-anchor="start" font-weight="bold" stroke="#333" stroke-width="0.18" >491 ms</text></svg>
<svg class="a" style="left:238.89999999999998px;top:276.4px;overflow:visible" width="1" height="1"><text x="0" y="1.72" font-family="Liberation Sans" font-size="5" fill="#777" textLength="3.9" lengthAdjust="spacingAndGlyphs" text-anchor="start" stroke="#777" stroke-width="0.18" >✓</text></svg>
<svg class="a" style="left:243.2px;top:276.4px;overflow:visible" width="1" height="1"><text x="0" y="1.97" font-family="Liberation Sans" font-size="5.7" fill="#222" textLength="19.1" lengthAdjust="spacingAndGlyphs" text-anchor="start" stroke="#222" stroke-width="0.18" >forEach</text></svg>
<svg class="a" style="left:363.5px;top:276.5px;overflow:visible" width="1" height="1"><text x="0" y="1.90" font-family="Liberation Sans" font-size="5.5" fill="#a0a0a0" textLength="16.8" lengthAdjust="spacingAndGlyphs" text-anchor="start" stroke="#a0a0a0" stroke-width="0.18" >491 ms</text></svg>
<div class="a" style="left:381px;top:266px;width:400px;height:95.5px;background:#000000;"></div>
<div class="a" style="left:387.5px;top:266.3px;width:293.5px;height:12px;background:#e9f1e6;"></div>
<div class="a m" style="left:388.5px;top:267.80px;font-size:10.3px;letter-spacing:-0.54px;line-height:12.45px;color:#222">"C:\Program Files\Java\jdk1.8.0_92\bin\java.exe" ...</div>
<div class="a m" style="left:388.5px;top:292.70px;font-size:10.3px;letter-spacing:-0.54px;line-height:12.45px;color:#3b4f9c">Process finished with exit code 0</div>
<div class="a" style="left:781px;top:266px;width:11.5px;height:95.5px;background:#eeeeee;"></div>
<div class="a" style="left:784.5px;top:276px;width:5px;height:4.5px;background:#d0d0d0;"></div>
<div class="a" style="left:784.5px;top:286px;width:5px;height:4.5px;background:#d0d0d0;"></div>
<div class="a" style="left:784.5px;top:296.5px;width:5px;height:4.5px;background:#aaaaaa;"></div>
<div class="a" style="left:784.5px;top:307px;width:5px;height:4.5px;background:#777;"></div>
<div class="a" style="left:784.5px;top:317px;width:5px;height:4.5px;background:#777;"></div>
<div class="a" style="left:784.5px;top:327px;width:5px;height:4.5px;background:#777;"></div>
<div class="a" style="left:333px;top:210.2px;width:161.8px;height:32.4px;background:#f4f4f7;border:0.6px solid #b8b8c8"></div>
<div class="a" style="left:333.3px;top:210.5px;width:161.2px;height:12.9px;background:#1f5aa3;"></div>
<div class="a m" style="left:336.6px;top:211.50px;font-size:10.3px;letter-spacing:-0.54px;line-height:12.45px;color:#fff">forEachWithOccurrencesTest</div>
<div class="a m" style="left:336.6px;top:225.40px;font-size:10.3px;letter-spacing:-0.54px;line-height:12.45px;color:#1a1a1a"><span style="color:#8a2a8a">forEach</span>BagTest</div>
<svg class="a" style="left:336.7px;top:240px;overflow:visible" width="1" height="1"><text x="0" y="1.31" font-family="Liberation Sans" font-size="3.8" fill="#aaa" textLength="123.6" lengthAdjust="spacingAndGlyphs" text-anchor="start" stroke="#aaa" stroke-width="0.18" >Ctrl+Down and Ctrl+Up will move caret down and up in the editor</text></svg>
<div class="a" style="left:200px;top:361.2px;width:600px;height:8.6px;background:#ececec;border-top:0.6px solid #d0d0d0"></div>
<div class="a" style="left:350px;top:361.8px;width:27px;height:7.8px;background:#d6d6d6;"></div>
<svg class="a" style="left:218.39999999999998px;top:365.7px;overflow:visible" width="1" height="1"><text x="0" y="1.93" font-family="Liberation Sans" font-size="5.6" fill="#333" textLength="19.9" lengthAdjust="spacingAndGlyphs" text-anchor="start" stroke="#333" stroke-width="0.18" >Problems</text></svg>
<svg class="a" style="left:252.7px;top:365.7px;overflow:visible" width="1" height="1"><text x="0" y="1.93" font-family="Liberation Sans" font-size="5.6" fill="#333" textLength="26.3" lengthAdjust="spacingAndGlyphs" text-anchor="start" stroke="#333" stroke-width="0.18" >0: Messages</text></svg>
<svg class="a" style="left:294.09999999999997px;top:365.7px;overflow:visible" width="1" height="1"><text x="0" y="1.93" font-family="Liberation Sans" font-size="5.6" fill="#333" textLength="20.2" lengthAdjust="spacingAndGlyphs" text-anchor="start" stroke="#333" stroke-width="0.18" >Terminal</text></svg>
<svg class="a" style="left:327.7px;top:365.7px;overflow:visible" width="1" height="1"><text x="0" y="1.93" font-family="Liberation Sans" font-size="5.6" fill="#333" textLength="18.1" lengthAdjust="spacingAndGlyphs" text-anchor="start" stroke="#333" stroke-width="0.18" >Statistic</text></svg>
<svg class="a" style="left:360.09999999999997px;top:365.7px;overflow:visible" width="1" height="1"><text x="0" y="1.93" font-family="Liberation Sans" font-size="5.6" fill="#333" textLength="15.5" lengthAdjust="spacingAndGlyphs" text-anchor="start" stroke="#333" stroke-width="0.18" >4: Run</text></svg>
<svg class="a" style="left:388.09999999999997px;top:365.7px;overflow:visible" width="1" height="1"><text x="0" y="1.93" font-family="Liberation Sans" font-size="5.6" fill="#333" textLength="19.9" lengthAdjust="spacingAndGlyphs" text-anchor="start" stroke="#333" stroke-width="0.18" >5: Debug</text></svg>
<svg class="a" style="left:423.2px;top:365.7px;overflow:visible" width="1" height="1"><text x="0" y="1.93" font-family="Liberation Sans" font-size="5.6" fill="#333" textLength="17.1" lengthAdjust="spacingAndGlyphs" text-anchor="start" stroke="#333" stroke-width="0.18" >6: TODO</text></svg>
<svg class="a" style="left:766.7px;top:365.7px;overflow:visible" width="1" height="1"><text x="0" y="1.93" font-family="Liberation Sans" font-size="5.6" fill="#333" textLength="21.6" lengthAdjust="spacingAndGlyphs" text-anchor="start" stroke="#333" stroke-width="0.18" >Event Log</text></svg>
<svg class="a" style="left:212px;top:363px" width="5" height="5"><path d="M2.5 0.3 L4.8 4.5 L0.2 4.5Z" fill="#444"/></svg>
<div class="a" style="left:247.5px;top:363.5px;width:3.2px;height:4px;background:transparent;border-top:0.7px solid #555;border-bottom:0.7px solid #555;border-left:0.7px solid #555"></div>
<div class="a" style="left:288px;top:363.4px;width:4.5px;height:4.5px;background:#555;"></div>
<div class="a" style="left:323.6px;top:363.4px;width:3px;height:4.5px;background:#444;border-radius:1px"></div>
<svg class="a" style="left:353px;top:363.5px" width="4" height="5"><path d="M0.5 0.3 L3.5 2.2 L0.5 4.2Z" fill="#555"/></svg>
<div class="a" style="left:383.2px;top:363.5px;width:3.5px;height:4px;background:#444;border-radius:50%"></div>
<div class="a" style="left:417.3px;top:363.5px;width:3.5px;height:4px;background:transparent;border-left:0.7px solid #666;border-right:0.7px solid #666"></div>
<div class="a" style="left:760px;top:363.5px;width:5px;height:5px;background:transparent;border:0.8px solid #666;border-radius:50%"></div>
<div class="a" style="left:200px;top:369.8px;width:600px;height:8.2px;background:#f0f0f0;border-top:0.6px solid #dedede"></div>
<div class="a" style="left:202.5px;top:372px;width:4.2px;height:4.2px;background:transparent;border:0.7px solid #777"></div>
<svg class="a" style="left:212.2px;top:374px;overflow:visible" width="1" height="1"><text x="0" y="2.00" font-family="Liberation Sans" font-size="5.8" fill="#333" textLength="71.8" lengthAdjust="spacingAndGlyphs" text-anchor="start" stroke="#333" stroke-width="0.18" >Tests passed: 1 (a minute ago)</text></svg>
<div class="a" style="left:650px;top:371.5px;width:4px;height:4px;background:transparent;border:0.8px solid #666;border-radius:50%"></div>
<svg class="a" style="left:659.7px;top:373.7px;overflow:visible" width="1" height="1"><text x="0" y="1.93" font-family="Liberation Sans" font-size="5.6" fill="#333" textLength="13.6" lengthAdjust="spacingAndGlyphs" text-anchor="start" stroke="#333" stroke-width="0.18" >66:24</text></svg>
<svg class="a" style="left:677.7px;top:373.7px;overflow:visible" width="1" height="1"><text x="0" y="1.93" font-family="Liberation Sans" font-size="5.6" fill="#333" textLength="15.6" lengthAdjust="spacingAndGlyphs" text-anchor="start" stroke="#333" stroke-width="0.18" >CRLF ÷</text></svg>
<svg class="a" style="left:696.7px;top:373.7px;overflow:visible" width="1" height="1"><text x="0" y="1.93" font-family="Liberation Sans" font-size="5.6" fill="#333" textLength="17.6" lengthAdjust="spacingAndGlyphs" text-anchor="start" stroke="#333" stroke-width="0.18" >UTF-8 ÷</text></svg>
<svg class="a" style="left:718.7px;top:373.7px;overflow:visible" width="1" height="1"><text x="0" y="1.93" font-family="Liberation Sans" font-size="5.6" fill="#333" textLength="24.6" lengthAdjust="spacingAndGlyphs" text-anchor="start" stroke="#333" stroke-width="0.18" >4 spaces ÷</text></svg>
<svg class="a" style="left:769.7px;top:373.7px;overflow:visible" width="1" height="1"><text x="0" y="1.93" font-family="Liberation Sans" font-size="5.6" fill="#333" textLength="26.6" lengthAdjust="spacingAndGlyphs" text-anchor="start" stroke="#333" stroke-width="0.18" >6 of 4829M</text></svg>
<div class="a" style="left:748px;top:371.5px;width:4px;height:4px;background:#666;"></div>
<div class="a" style="left:758px;top:371.3px;width:4px;height:4.8px;background:transparent;border:0.8px solid #555"></div>
<div class="a" style="left:765px;top:370.5px;width:3.5px;height:6px;background:#888;"></div>
<div class="a" style="left:200px;top:377.8px;width:600px;height:16px;background:#344b5f;"></div>
<div class="a" style="left:200px;top:377.8px;width:19px;height:16px;background:#395368;"></div>
<svg class="a" style="left:205px;top:382px" width="8" height="8"><g fill="#e6edf2"><path d="M0.3 1 L3.4 0.6 L3.4 3.5 L0.3 3.5Z"/><path d="M3.9 0.5 L7.6 0 L7.6 3.5 L3.9 3.5Z"/><path d="M0.3 4 L3.4 4 L3.4 6.9 L0.3 6.5Z"/><path d="M3.9 4 L7.6 4 L7.6 7.5 L3.9 7Z"/></g></svg>
<div class="a" style="left:219px;top:377.8px;width:134px;height:16px;background:#b2bbc2;"></div>
<div class="a" style="left:223px;top:381.2px;width:8.4px;height:8.4px;background:transparent;border:1.2px solid #1a1a1a;border-radius:50%"></div>
<svg class="a" style="left:235.7px;top:386px;overflow:visible" width="1" height="1"><text x="0" y="2.42" font-family="Liberation Sans" font-size="7" fill="#333" textLength="51.6" lengthAdjust="spacingAndGlyphs" text-anchor="start" stroke="#333" stroke-width="0.18" >Type here to search</text></svg>
<div class="a" style="left:344px;top:382.5px;width:3px;height:6px;background:#333;border-radius:1.5px"></div>
<div class="a" style="left:359px;top:382.5px;width:7px;height:6px;background:transparent;border:0.8px solid #cfd8de"></div>
<div class="a" style="left:379px;top:382px;width:6.5px;height:7px;background:transparent;border:1.6px solid #2a78c8;border-radius:50%"></div>
<div class="a" style="left:398px;top:382px;width:9px;height:7.5px;background:#d8cf8a;border-radius:1px"></div>
<div class="a" style="left:399.5px;top:384.5px;width:6px;height:3px;background:#6aa0b8;"></div>
<div class="a" style="left:416.5px;top:381px;width:9px;height:9px;background:#d84a3a;border-radius:50%"></div>
<div class="a" style="left:419px;top:383.5px;width:4px;height:4px;background:#3a7ad8;border-radius:50%;box-shadow:0 0 0 0.9px #fff"></div>
<div class="a" style="left:436px;top:381px;width:9px;height:9px;background:#f0e020;border-radius:1px"></div>
<div class="a" style="left:441px;top:386px;width:3px;height:3px;background:#222;"></div>
<div class="a" style="left:455px;top:381.5px;width:9px;height:8px;background:#e6e8ea;border-radius:1px"></div>
<div class="a" style="left:470px;top:377.8px;width:19px;height:16px;background:#3d566c;"></div>
<div class="a" style="left:474px;top:381px;width:9px;height:9px;background:#c03050;border-radius:1px"></div>
<div class="a" style="left:476px;top:383px;width:5px;height:5px;background:#222;"></div>
<div class="a" style="left:495px;top:381.5px;width:8px;height:8px;background:#2a2a2a;border:0.8px solid #8a9a8a"></div>
<div class="a" style="left:497px;top:383.5px;width:4px;height:3px;background:#6a9a3a;"></div>
<div class="a" style="left:414px;top:392.8px;width:16px;height:1px;background:#b8c4cc;"></div>
<div class="a" style="left:433px;top:392.8px;width:16px;height:1px;background:#b8c4cc;"></div>
<div class="a" style="left:452px;top:392.8px;width:16px;height:1px;background:#b8c4cc;"></div>
<div class="a" style="left:471px;top:392.8px;width:16px;height:1px;background:#b8c4cc;"></div>
<div class="a" style="left:490px;top:392.8px;width:16px;height:1px;background:#b8c4cc;"></div>
<div class="a" style="left:693.5px;top:383.5px;width:5px;height:5px;background:transparent;border:0.8px solid #cfd8de;border-radius:50% 50% 0 0"></div>
<div class="a" style="left:706.5px;top:385.5px;width:3px;height:3px;background:transparent;border-left:0.8px solid #cfd8de;border-top:0.8px solid #cfd8de;transform:rotate(45deg)"></div>
<svg class="a" style="left:716.5px;top:383px" width="8" height="7"><path d="M0.5 2.3 H2 L4 0.5 V6 L2 4.3 H0.5Z" fill="#dfe6ea"/><path d="M5.2 1.8 C6.3 2.6 6.3 4 5.2 4.8" stroke="#dfe6ea" stroke-width="0.7" fill="none"/></svg>
<div class="a" style="left:726.5px;top:383.5px;width:5px;height:5px;background:transparent;border-right:0.8px solid #aab6be;border-top:0.8px solid #aab6be"></div>
<div class="a" style="left:736px;top:386.5px;width:6px;height:1.5px;background:#dfe6ea;"></div>
<div class="a" style="left:744.5px;top:383.5px;width:6px;height:5px;background:transparent;border:0.8px solid #aab6be;border-radius:1px"></div>
<svg class="a" style="left:757.7px;top:381.7px;overflow:visible" width="1" height="1"><text x="0" y="1.72" font-family="Liberation Sans" font-size="5" fill="#e8eef2" textLength="16.3" lengthAdjust="spacingAndGlyphs" text-anchor="start" stroke="#e8eef2" stroke-width="0.18" >7:44 AM</text></svg>
<svg class="a" style="left:756.9000000000001px;top:390px;overflow:visible" width="1" height="1"><text x="0" y="1.72" font-family="Liberation Sans" font-size="5" fill="#e8eef2" textLength="18.6" lengthAdjust="spacingAndGlyphs" text-anchor="start" stroke="#e8eef2" stroke-width="0.18" >4/5/2019</text></svg>
<div class="a" style="left:783.4px;top:383.2px;width:6.8px;height:5.3px;background:#e4eaee;"></div>
<div class="a" style="left:785px;top:388.3px;width:2px;height:1.3px;background:#e4eaee;"></div>
<div class="a" style="left:0px;top:394px;width:800px;height:8px;background:#111214;"></div>
<div class="a" style="left:0px;top:402px;width:800px;height:48px;background:#fff;"></div>
<svg class="a" style="left:0;top:402px" width="800" height="48" viewBox="0 402 800 48">
<g filter="none">
 <!-- Raiffeisen -->
 <rect x="43" y="419.3" width="14.5" height="13.8" fill="#f2ee30" stroke="#c8c84a" stroke-width="0.5"/>
 <g stroke="#111" stroke-width="2.2" stroke-linecap="round" fill="none">
  <path d="M46 430.5 L54.5 422"/>
  <path d="M46.5 422.3 L54.5 430.5"/>
 </g>
 <g stroke="#111" stroke-width="1.3" fill="none">
  <path d="M44.8 423.8 C45.5 421.5 47.5 421 48.5 422.5"/>
  <path d="M55.7 423.8 C55 421.5 53 421 52 422.5"/>
 </g>
 <text x="59.2" y="425.8" font-family="Liberation Sans" font-weight="bold" font-size="8.2" fill="#111" textLength="51" lengthAdjust="spacingAndGlyphs">Райффайзен</text>
 <text x="59.2" y="433.2" font-family="Liberation Sans" font-weight="bold" font-style="italic" font-size="8" fill="#111" textLength="22" lengthAdjust="spacingAndGlyphs">БАНК</text>
 <!-- Alfa -->
 <path d="M204.2 422.4 L208.3 409.2 L211.6 409.2 L215.8 422.4 L213 422.4 L212 419.2 L208 419.2 L207 422.4 Z M208.7 417 L211.3 417 L210 412.6 Z" fill="#d3202e"/>
 <rect x="204" y="426.5" width="11.9" height="2.2" fill="#d3202e"/>
 <text x="191" y="441.8" font-family="Liberation Sans" font-weight="bold" font-size="6.6" fill="#d3202e" textLength="38" lengthAdjust="spacingAndGlyphs">Альфа-Банк</text>
 <!-- Deutsche -->
 <rect x="336.6" y="413" width="13.5" height="13.6" fill="none" stroke="#3a4696" stroke-width="2"/>
 <path d="M340.3 423.8 L346.7 415.6" stroke="#3a4696" stroke-width="1.8"/>
 <text x="317" y="440.3" font-family="Liberation Sans" font-size="7.5" fill="#3a4696" textLength="52" lengthAdjust="spacingAndGlyphs">Deutsche Bank</text>
 <!-- Mediascope -->
 <path d="M460 412.7 L491.6 408.4 L491.6 443.6 L460 439.9 Z" fill="#1fae86"/>
 <text x="464.5" y="425" font-family="Liberation Sans" font-weight="bold" font-size="9.5" fill="#e9fff6" textLength="22" lengthAdjust="spacingAndGlyphs">MEDIA</text>
 <text x="464.5" y="435.5" font-family="Liberation Sans" font-weight="bold" font-size="10" fill="#e9fff6" textLength="23" lengthAdjust="spacingAndGlyphs">SCOPE</text>
 <rect x="465" y="437.3" width="21" height="1" fill="#bff0dc"/>
 <!-- Sportmaster -->
 <path d="M570.5 423.2 L575 425.3 L578.6 423 L576.5 426.8 L578.5 429.8 L574.5 427.8 L570.5 429.6 L572.8 426.5 Z" fill="#2a3a8a"/>
 <path d="M572 424 L576 426 L574.2 427.2Z" fill="#d42a3a"/>
 <text x="580" y="428.8" font-family="Liberation Sans" font-weight="bold" font-size="8.6" fill="#28348a" textLength="55.5" lengthAdjust="spacingAndGlyphs">sportmaster</text>
 <rect x="636" y="421.4" width="13.5" height="10" rx="1.5" fill="#e01a2a"/>
 <text x="637.2" y="429" font-family="Liberation Sans" font-size="7" fill="#fff" textLength="11" lengthAdjust="spacingAndGlyphs">kpb</text>
 <!-- hh -->
 <circle cx="742.2" cy="426" r="12.8" fill="#d10f1b"/>
 <text x="734.2" y="430.3" font-family="Liberation Sans" font-weight="bold" font-size="12.5" fill="#fff" textLength="16" lengthAdjust="spacingAndGlyphs">hh</text>
</g>
</svg>
</body></html>
